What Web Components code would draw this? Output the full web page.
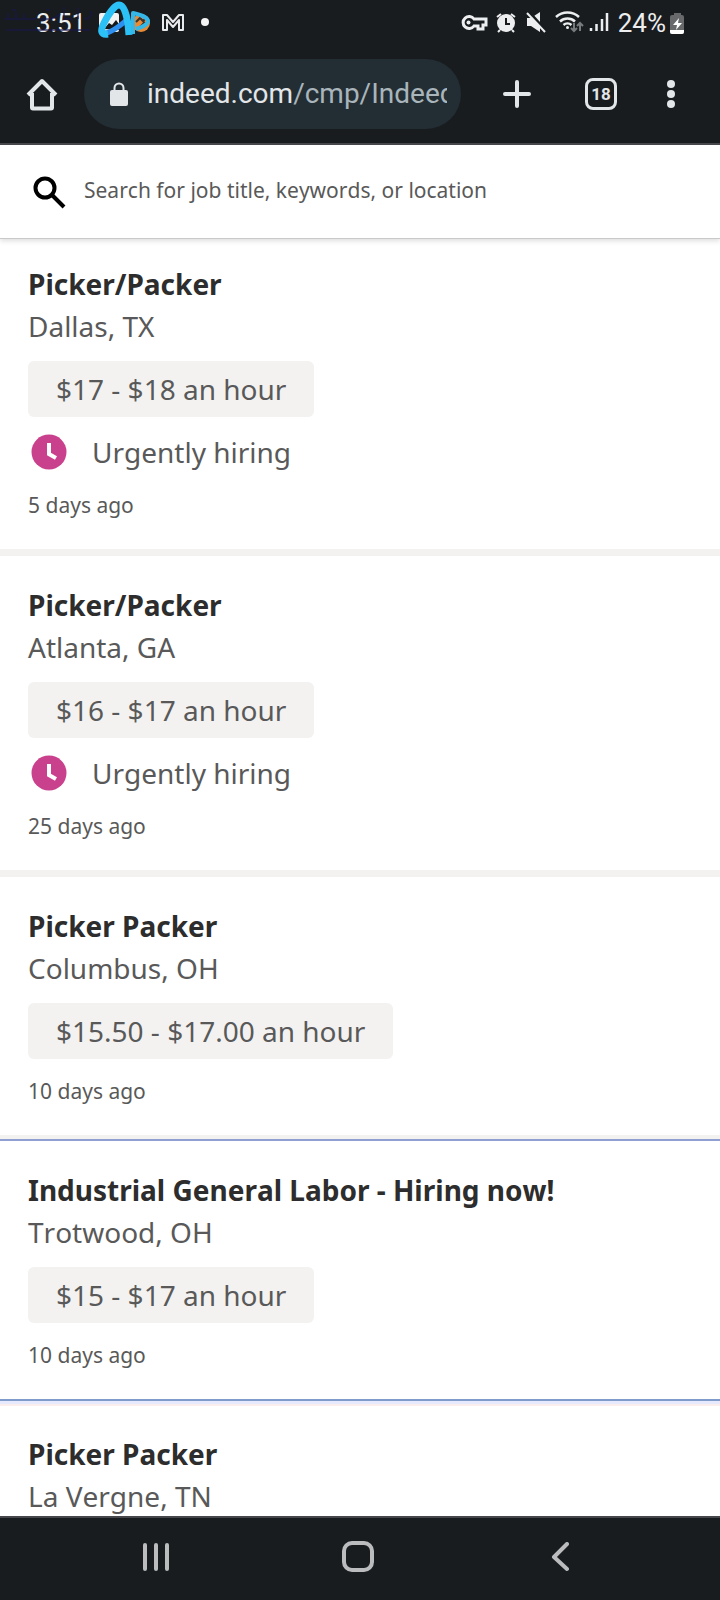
<!DOCTYPE html>
<html lang="en">
<head>
<meta charset="utf-8">
<meta name="viewport" content="width=device-width, initial-scale=1">
<title>Indeed jobs</title>
<style>
html, body { margin: 0; height: 100%; background: #fff; }
body { font-family: "Noto Sans", "Open Sans", sans-serif; overflow: hidden; }
</style>
</head>
<body>
<phone-screen>
  <status-bar slot="top" time="3:51" battery="24%"></status-bar>
  <browser-bar slot="top" host="indeed.com" path="/cmp/Indeed" tabs="18"></browser-bar>
  <job-search></job-search>
  <job-card first when="5 days ago" urgent><span slot="title">Picker/Packer</span><span slot="place">Dallas, TX</span><span slot="pay">$17 - $18 an hour</span></job-card>
  <job-card when="25 days ago" urgent><span slot="title">Picker/Packer</span><span slot="place">Atlanta, GA</span><span slot="pay">$16 - $17 an hour</span></job-card>
  <job-card before-active when="10 days ago"><span slot="title">Picker Packer</span><span slot="place">Columbus, OH</span><span slot="pay">$15.50 - $17.00 an hour</span></job-card>
  <job-card active when="10 days ago"><span slot="title">Industrial General Labor - Hiring now!</span><span slot="place">Trotwood, OH</span><span slot="pay">$15 - $17 an hour</span></job-card>
  <job-card brief><span slot="title">Picker Packer</span><span slot="place">La Vergne, TN</span></job-card>
  <nav-bar slot="bottom"></nav-bar>
</phone-screen>
<script>
const define = (name, render) => customElements.define(name, class extends HTMLElement {
  connectedCallback() {
    if (this.shadowRoot) return;
    this.attachShadow({ mode: 'open' }).innerHTML = render(this);
  }
});

define('phone-screen', () => `
<style>
:host { display: flex; flex-direction: column; height: 100vh; }
header, footer { flex: none; }
main { flex: 1; min-height: 0; overflow: hidden; background: #fff; }
</style>
<header><slot name="top"></slot></header>
<main><slot></slot></main>
<footer><slot name="bottom"></slot></footer>`);

define('status-bar', el => `
<style>
:host { display: flex; justify-content: space-between; align-items: center; height: 45px; padding: 0 34px 0 36px; background: #191c1f; color: #eceeef; font: 26px/30px Roboto, sans-serif; position: relative; }
div { display: flex; align-items: center; }
svg { display: block; overflow: visible; }
.mark { position: absolute; left: 0; top: 0; }
.notes { margin-left: 12px; }
</style>
<svg class="mark" width="96" height="40" fill="none" stroke="#17164a" stroke-width="2" opacity=".6" aria-hidden="true"><path d="M4 19h32M8 13v6M16 12v7M24 14v5M40 19c10 1 16-1 20-5M64 7v12h8M78 19V8M84 19q8 0 7-8M6 30h84M12 10h4M46 10h4"/></svg>
<div>
  <span>${el.getAttribute('time')}</span>
  <svg class="notes" width="114" height="45" viewBox="97 0 114 45" aria-hidden="true">
    <rect x="98" y="13" width="20" height="19" rx="2" fill="#f2f2f2"/>
    <path d="M103 29l5-6 3 2 4-5 5 7v3z" fill="#15191c"/>
    <circle cx="140" cy="23" r="9" fill="#e98a35"/><path d="M135 22l4-4 3 3 3-3M138 28l6-6" stroke="#38322d" stroke-width="2" fill="none"/>
    <path d="M104 33C110 33 120 25 127 19" fill="none" stroke="#2d8fee" stroke-width="5"/>
    <path d="M107 34C100 35 99 31 103 23C108 13 114 5 118 5C124 5 127 19 128 35" fill="none" stroke="#2bc0f6" stroke-width="7" stroke-linejoin="round"/>
    <path d="M132 34V13C141 15 147 18 147 21C147 25 141 27 135 29" fill="none" stroke="#35b8e8" stroke-width="4" stroke-linejoin="round"/>
    <path d="M162 30V15h4l6 7 6-7h4v15h-4V20l-6 7-6-7v10z" fill="none" stroke="#e8eaeb" stroke-width="2" stroke-linejoin="round"/>
    <circle cx="204" cy="22" r="4" fill="#f5f5f5"/>
  </svg>
</div>
<div>
  <svg width="157" height="45" viewBox="460 0 157 45" aria-hidden="true">
    <g fill="none" stroke="#eceeef">
      <path d="M473 19A6 6 0 1 0 473 26H477V29H482V25H485V19Z" stroke-width="3"/><circle cx="467.500" cy="22.500" r="2" fill="#eceeef" stroke="none"/>
      <circle cx="505" cy="23" r="9" fill="#eceeef" stroke="none"/><path d="M496 17l4-3M514 17l-4-3M499 30l-2 2M511 30l2 2" stroke-width="2"/><path d="M505 18v6h4" stroke="#191c1f" stroke-width="2"/>
      <path d="M526 18h4l9-6v20l-9-6h-4z" fill="#eceeef" stroke="none"/><path d="M528 12l18 20" stroke="#191c1f" stroke-width="3"/><path d="M526 13l18 19" stroke-width="2"/>
      <path d="M555 17a17 17 0 0 1 23 0M559 21.500a11 11 0 0 1 15 0M562.500 25a6 6 0 0 1 8 0" stroke-width="2.500"/><circle cx="566.500" cy="27.500" r="1.500" fill="#eceeef" stroke="none"/>
      <path d="M573 23v8m-3-3l3 3 3-3M579 31v-8m-3 3l3-3 3 3" stroke="#777b7e" stroke-width="2"/>
      <path d="M590 31v-3M595.500 31v-7M601 31v-12M606 31V13" stroke-width="2.500"/>
    </g>
  </svg>
  <span>${el.getAttribute('battery')}</span>
  <svg style="margin-left:4px" width="16" height="24" viewBox="670 10 16 24" aria-hidden="true">
    <path d="M674 12h7v2h1q2 0 2 2v15q0 2-2 2h-10q-2 0-2-2V16q0-2 2-2h2z" fill="#67696b"/><path d="M670 29h14v2q0 2-2 2h-10q-2 0-2-2z" fill="#fff"/><path d="M679 17l-6 7h4l-1 5 6-7h-4z" fill="#fff"/>
  </svg>
</div>`);

define('browser-bar', el => `
<style>
:host { display: flex; align-items: center; height: 98px; padding: 0 21px 0 14px; background: #191c1f; border-bottom: 2px solid #46474a; color: #e3e6e8; }
button { flex: none; width: 56px; height: 56px; padding: 0; border: 0; background: none; color: inherit; display: grid; place-items: center; }
.url { flex: 1; min-width: 0; height: 70px; margin: 0 28px 0 14px; padding: 0 14px 0 25px; border-radius: 35px; background: #222e34; display: flex; align-items: center; gap: 18px; font: 28px/40px Roboto, sans-serif; text-align: left; }
.url svg { flex: none; }
.url span { flex: 1; min-width: 0; overflow: hidden; white-space: nowrap; }
.url i { font-style: normal; color: #a9b4bb; }
.tabs { margin: 0 14px 0 28px; }
.tabs b { box-sizing: border-box; width: 32px; height: 32px; border: 3px solid #e3e6e8; border-radius: 8px; font: bold 17px/26px Roboto, sans-serif; text-align: center; }
svg { display: block; }
</style>
<button aria-label="Home"><svg width="34" height="34" viewBox="0 0 34 34" fill="none" stroke="#e3e6e8" stroke-width="4" stroke-linejoin="round"><path d="M3 18L17 4l14 14M7 16v14.500q0 1 1 1h18q1 0 1-1V16"/></svg></button>
<button class="url" aria-label="Address"><svg width="20" height="24" viewBox="0 0 20 24"><rect x="1" y="8" width="18" height="16" rx="2" fill="#e3e6e8"/><path d="M5.500 9V6a4.500 4.500 0 0 1 9 0v3" fill="none" stroke="#e3e6e8" stroke-width="2"/></svg><span>${el.getAttribute('host')}<i>${el.getAttribute('path')}</i></span></button>
<button aria-label="New tab"><svg width="28" height="28" stroke="#e3e6e8" stroke-width="4" stroke-linecap="round"><path d="M14 2v24M2 14h24"/></svg></button>
<button class="tabs" aria-label="Tabs"><b>${el.getAttribute('tabs')}</b></button>
<button aria-label="Menu"><svg width="8" height="30" fill="#e3e6e8"><circle cx="4" cy="5" r="4"/><circle cx="4" cy="15" r="4"/><circle cx="4" cy="25" r="4"/></svg></button>`);

define('job-search', () => `
<style>
:host { display: block; background: #fff; border-bottom: 1px solid #c9c9c9; box-shadow: 0 2px 5px #0002; position: relative; }
label { display: flex; align-items: center; gap: 18px; height: 93px; padding: 0 28px 0 32px; box-sizing: border-box; }
input { flex: 1; min-width: 0; border: 0; padding: 0 0 4px; outline: 0; background: none; font: 21px/32px "Noto Sans", sans-serif; font-kerning: none; color: #2d2d2d; }
input::placeholder { color: #595959; opacity: 1; }
svg { flex: none; }
</style>
<label><svg width="34" height="34" fill="none" stroke="#000" stroke-width="4" aria-hidden="true"><circle cx="13" cy="13" r="9.500"/><path d="M20 20l12 12"/></svg><input type="search" aria-label="Search jobs" placeholder="Search for job title, keywords, or location"></label>`);

define('job-card', el => `
<style>
:host { display: block; padding: 28px; border-bottom: 7px solid #f3f2f1; font: 28px/42px "Noto Sans", sans-serif; font-kerning: none; color: #595959; }
:host([first]) { padding-top: 24px; }
:host([before-active]) { border-bottom-width: 4px; }
:host([active]) { border-top: 2px solid #8f9fd2; border-bottom: 2px solid #7f9bcb; box-shadow: 0 3px 0 #e6eafc, 0 5px 0 #fdeeee; margin-bottom: 4px; }
h2, p { margin: 0; font: inherit; font-kerning: none; }
h2 { font-weight: bold; color: #2d2d2d; }
a { color: inherit; text-decoration: none; }
.pay { width: fit-content; margin-top: 14px; padding: 7px 28px; border-radius: 6px; background: #f3f2f1; }
.urgent { display: flex; align-items: center; gap: 25px; margin-top: 14px; padding-left: 3px; }
.when { margin-top: 16px; font-size: 21px; line-height: 32px; }
</style>
<article>
<h2><a href="#"><slot name="title"></slot></a></h2>
<p><slot name="place"></slot></p>
${el.hasAttribute('brief') ? '' : `<p class="pay"><slot name="pay"></slot></p>
${el.hasAttribute('urgent') ? `<p class="urgent"><svg width="36" height="36" aria-hidden="true"><circle cx="18" cy="18" r="17.500" fill="#c9408c"/><path d="M18 9v11l7 4" fill="none" stroke="#fff" stroke-width="4"/></svg>Urgently hiring</p>` : ''}
<p class="when">${el.getAttribute('when')}</p>`}
</article>`);

define('nav-bar', () => `
<style>
:host { display: block; background: #191c1f; border-top: 2px solid #46474a; }
nav { display: flex; justify-content: space-between; align-items: center; height: 82px; padding: 0 130px 4px 126px; box-sizing: border-box; }
button { width: 60px; height: 60px; padding: 0; border: 0; background: none; display: grid; place-items: center; }
svg { fill: none; stroke: #babcbe; stroke-width: 4; stroke-linecap: round; stroke-linejoin: round; }
</style>
<nav>
<button aria-label="Recent apps"><svg width="28" height="30"><path d="M3 3v24M14 3v24M25 3v24"/></svg></button>
<button aria-label="Home"><svg width="32" height="32"><rect x="2" y="2" width="28" height="27" rx="8"/></svg></button>
<button aria-label="Back"><svg width="18" height="30"><path d="M16 2L3 15l13 12"/></svg></button>
</nav>`);
</script>
</body>
</html>
